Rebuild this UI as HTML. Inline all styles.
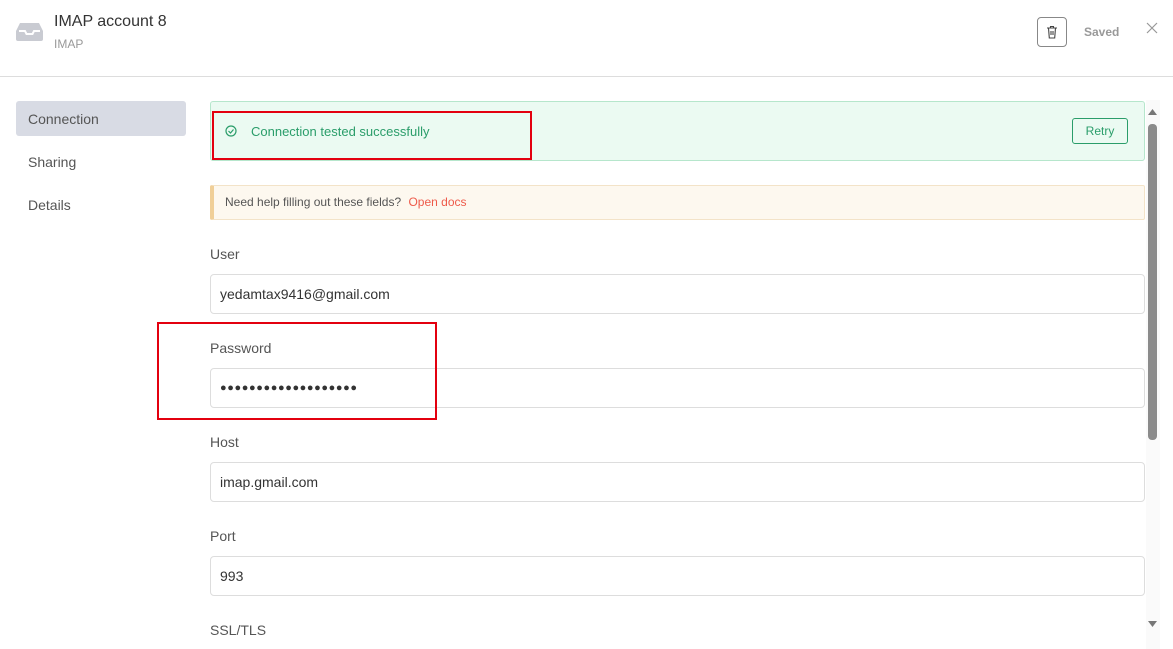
<!DOCTYPE html>
<html><head><style>
*{box-sizing:border-box;margin:0;padding:0}
body{width:1173px;height:649px;overflow:hidden;background:#fff;font-family:"Liberation Sans",sans-serif;position:relative;color:#333}
.abs{position:absolute}
.lbl{position:absolute;left:210px;font-size:14px;color:#555}
.inp{position:absolute;left:210px;width:935px;height:40px;border:1px solid #ddd;border-radius:4px;font-size:14px;color:#333;padding:11px 9px}
</style></head><body>
<svg class="abs" style="left:16px;top:22px" width="27" height="19" viewBox="0 0 27 19"><path d="M4 1h19l4 8v8a2 2 0 0 1-2 2H2a2 2 0 0 1-2-2V9z" fill="#c9cbd2"/><path d="M3 9h6l1.5 3h6L18 9h6" fill="none" stroke="#fff" stroke-width="2"/></svg>
<div class="abs" style="left:54px;top:13px;font-size:16px;color:#333">IMAP account 8</div>
<div class="abs" style="left:54px;top:37px;font-size:12px;color:#999">IMAP</div>
<div class="abs" style="left:1037px;top:17px;width:30px;height:30px;border:1px solid #888;border-radius:4px"></div>
<svg class="abs" style="left:1046px;top:25px" width="12" height="14" viewBox="0 0 12 14"><path d="M1 3h10M4.5 3V1.5h3V3M2.5 3l.8 10h5.4l.8-10M5 6v4M7 6v4" fill="none" stroke="#444" stroke-width="1.1"/></svg>
<div class="abs" style="left:1084px;top:25px;font-size:12px;color:#999;font-weight:bold">Saved</div>
<svg class="abs" style="left:1146px;top:22px" width="12" height="12"><path d="M1 1l10 10M11 1L1 11" stroke="#999" stroke-width="1.2"/></svg>
<div class="abs" style="left:0;top:76px;width:1173px;height:1px;background:#ddd"></div>
<div class="abs" style="left:16px;top:101px;width:170px;height:35px;background:#d8dbe4;border-radius:3px"></div>
<div class="abs" style="left:28px;top:111px;font-size:14px;color:#555">Connection</div>
<div class="abs" style="left:28px;top:154px;font-size:14px;color:#555">Sharing</div>
<div class="abs" style="left:28px;top:197px;font-size:14px;color:#555">Details</div>
<div class="abs" style="left:210px;top:101px;width:935px;height:60px;background:#ebfaf2;border:1px solid #b6e6cc;border-radius:3px"></div>
<svg class="abs" style="left:225px;top:125px" width="12" height="12"><circle cx="6" cy="6" r="5" fill="none" stroke="#2a9d6a" stroke-width="1.2"/><path d="M3.5 6l2 2 3-3.5" fill="none" stroke="#2a9d6a" stroke-width="1.2"/></svg>
<div class="abs" style="left:251px;top:124px;font-size:13px;color:#2a9d6a">Connection tested successfully</div>
<div class="abs" style="left:1072px;top:118px;width:56px;height:26px;border:1px solid #2a9d6a;border-radius:3px;font-size:12px;color:#2a9d6a;text-align:center;line-height:24px">Retry</div>
<div class="abs" style="left:212px;top:111px;width:320px;height:49px;border:2px solid #e3000f"></div>
<div class="abs" style="left:210px;top:185px;width:935px;height:35px;background:#fdf8ef;border:1px solid #f3e3c8;border-left:4px solid #f0cf98;border-radius:2px"></div>
<div class="abs" style="left:225px;top:195px;font-size:12px;color:#555">Need help filling out these fields? <span style="color:#ee5a4a;margin-left:4px">Open docs</span></div>
<div class="lbl" style="top:246px">User</div>
<div class="inp" style="top:274px">yedamtax9416@gmail.com</div>
<div class="lbl" style="top:340px">Password</div>
<div class="inp" style="top:368px;letter-spacing:0.6px;font-size:11px;padding-top:13px">●●●●●●●●●●●●●●●●●●●</div>
<div class="abs" style="left:157px;top:322px;width:280px;height:98px;border:2px solid #e3000f"></div>
<div class="lbl" style="top:434px">Host</div>
<div class="inp" style="top:462px">imap.gmail.com</div>
<div class="lbl" style="top:528px">Port</div>
<div class="inp" style="top:556px">993</div>
<div class="lbl" style="top:622px">SSL/TLS</div>
<div class="abs" style="left:1146px;top:100px;width:14px;height:549px;background:#fafafa"></div>
<svg class="abs" style="left:1147px;top:108px" width="11" height="8"><path d="M1 7L5.5 1 10 7z" fill="#777"/></svg>
<div class="abs" style="left:1148px;top:124px;width:9px;height:316px;background:#8b8b8b;border-radius:4px"></div>
<svg class="abs" style="left:1147px;top:620px" width="11" height="8"><path d="M1 1L5.5 7 10 1z" fill="#777"/></svg>
</body></html>
